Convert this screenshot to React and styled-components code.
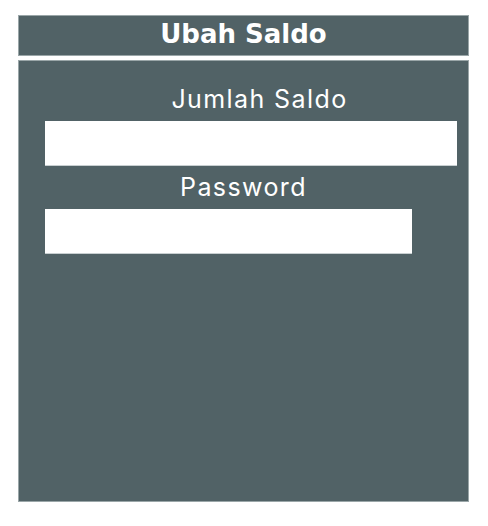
import React from "react";
import styled, { createGlobalStyle } from "styled-components";

const GlobalStyle = createGlobalStyle`
  * {
    box-sizing: border-box;
  }
  body {
    margin: 0;
    background: #ffffff;
    font-family: "Inter", "Liberation Sans", sans-serif;
  }
`;

const Page = styled.div`
  width: 488px;
  padding: 15px 19px 0 18px;
`;

const Header = styled.div`
  height: 41px;
  background: #516266;
  border: 1px solid #9aa6a8;
  display: flex;
  align-items: center;
  justify-content: center;
  padding-bottom: 3px;
`;

const Title = styled.h1`
  margin: 0;
  font-family: "DejaVu Sans", "Lato", sans-serif;
  font-weight: 700;
  font-size: 26px;
  line-height: 30px;
  color: #ffffff;
`;

const Body = styled.div`
  margin-top: 4px;
  height: 442px;
  background: #516266;
  border: 1px solid #9aa6a8;
  padding: 23px 26px 0;
  display: flex;
  flex-direction: column;
`;

const Label = styled.label`
  display: block;
  text-align: center;
  font-size: 25px;
  font-weight: 400;
  line-height: 30px;
  color: #ffffff;
  letter-spacing: 1.4px;
  padding-left: ${(p) => p.$shift || 0}px;
  margin-bottom: 7px;
`;

const Input = styled.input`
  display: block;
  width: ${(p) => p.$width}px;
  height: 45px;
  border: none;
  border-bottom: 1px solid #c8cfd1;
  background: #ffffff;
  margin: 0 0 6px;
  padding: 0 10px;
  font-size: 18px;
  outline: none;
`;

export default function App() {
  return (
    <>
      <GlobalStyle />
      <Page>
        <Header>
          <Title>Ubah Saldo</Title>
        </Header>
        <Body>
          <Label $shift={32}>Jumlah Saldo</Label>
          <Input type="text" $width={412} />
          <Label>Password</Label>
          <Input type="password" $width={367} />
        </Body>
      </Page>
    </>
  );
}
